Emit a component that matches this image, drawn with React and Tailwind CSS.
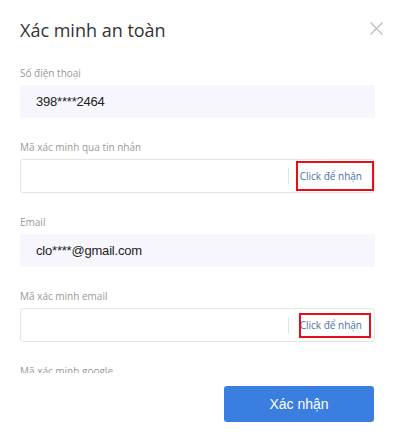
const sans = "font-['Open_Sans','Noto_Sans',sans-serif]";
const arial = "font-['Liberation_Sans',Arial,sans-serif]";

const Label = ({ children }) => (
  <div className={`${sans} text-[10px] leading-[14px] text-[#999] mb-[5px]`}>{children}</div>
);

const ReadOnlyField = ({ label, value }) => (
  <div>
    <Label>{label}</Label>
    <div className={`${arial} h-[33px] bg-[#f7f6fc] rounded-[2px] pl-4 flex items-center text-[13px] text-[#222] tracking-[-0.2px]`}>
      {value}
    </div>
  </div>
);

const CodeField = ({ label, mark }) => (
  <div>
    <Label>{label}</Label>
    <div className="relative h-[34px] border border-[#e4e4e4] rounded-[3px] flex items-center">
      <input className="flex-1 h-full bg-transparent outline-none px-3" />
      <div className="w-px h-[16px] bg-[#e2e2e2]" />
      <button className={`${sans} text-[10px] text-[#4a70a8] pl-[11px] pr-[12px]`}>Click để nhận</button>
      {/* red annotation box */}
      <div className={`absolute border-2 border-[#e3101c] pointer-events-none ${mark}`} />
    </div>
  </div>
);

export default function App() {
  return (
    <div className="w-[400px] h-[438px] bg-white flex flex-col">
      <div className="h-[60px] pl-5 pr-[17px] pt-[17px] flex justify-between items-start">
        <h2 className={`${sans} text-[18px] leading-[26px] text-[#333]`}>Xác minh an toàn</h2>
        <svg className="w-[13px] h-[13px] mt-[5px]" viewBox="0 0 13 13" fill="none" stroke="#b8b8b8" strokeWidth="1.1">
          <path d="M0.5 0.5L12.5 12.5M12.5 0.5L0.5 12.5" />
        </svg>
      </div>

      <div className="h-[313px] overflow-hidden pl-5 pr-[25px] pt-[6px] flex flex-col gap-[22px]">
        <ReadOnlyField label="Số điện thoại" value="398****2464" />
        <CodeField label="Mã xác minh qua tin nhắn" mark="left-[275px] top-[1px] w-[78px] h-[30px]" />
        <ReadOnlyField label="Email" value="clo****@gmail.com" />
        <CodeField label="Mã xác minh email" mark="left-[278px] top-[4px] w-[72px] h-[25px]" />
        <div>
          <Label>Mã xác minh google</Label>
          <div className="h-[34px] border border-[#e4e4e4] rounded-[3px]" />
        </div>
      </div>

      <div className="pt-[13px] pr-[26px] flex justify-end">
        <button className={`${arial} w-[150px] h-[36px] rounded-[3px] bg-[#3a7ee0] text-white text-[14px]`}>
          Xác nhận
        </button>
      </div>
    </div>
  );
}
